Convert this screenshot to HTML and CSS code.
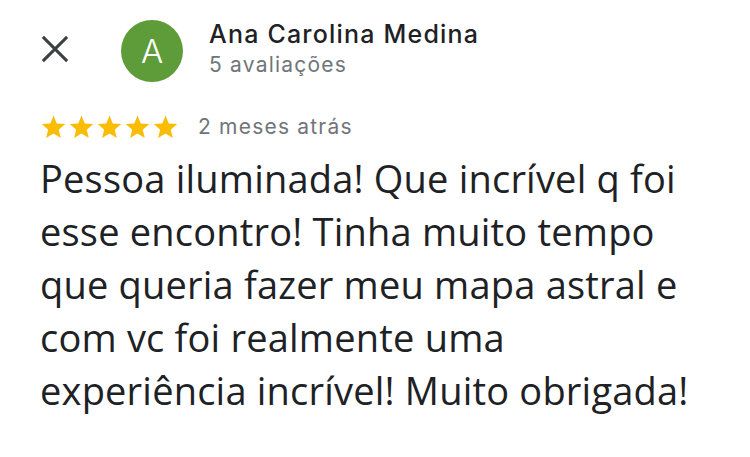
FILE: index.html
```html
<!DOCTYPE html>
<html lang="pt">
<head>
<meta charset="utf-8">
<link rel="stylesheet" href="styles.css">
</head>
<body>
<div class="review">
  <div class="header">
    <svg class="close" width="30" height="30" viewBox="0 0 30 30"><path d="M2 2 L28 28 M28 2 L2 28" stroke="#3c4043" stroke-width="3.2" stroke-linecap="butt"/></svg>
    <div class="avatar">A</div>
    <div class="who">
      <div class="name">Ana Carolina Medina</div>
      <div class="count">5 avaliações</div>
    </div>
  </div>
  <div class="meta">
    <div class="stars">
      <svg viewBox="0 0 24 24" class="star"><path d="M12 1.5l3.1 7.6 8.2.6-6.3 5.3 2 8L12 18.6 4.9 23l2-8L.7 9.7l8.2-.6z"/></svg>
      <svg viewBox="0 0 24 24" class="star"><path d="M12 1.5l3.1 7.6 8.2.6-6.3 5.3 2 8L12 18.6 4.9 23l2-8L.7 9.7l8.2-.6z"/></svg>
      <svg viewBox="0 0 24 24" class="star"><path d="M12 1.5l3.1 7.6 8.2.6-6.3 5.3 2 8L12 18.6 4.9 23l2-8L.7 9.7l8.2-.6z"/></svg>
      <svg viewBox="0 0 24 24" class="star"><path d="M12 1.5l3.1 7.6 8.2.6-6.3 5.3 2 8L12 18.6 4.9 23l2-8L.7 9.7l8.2-.6z"/></svg>
      <svg viewBox="0 0 24 24" class="star"><path d="M12 1.5l3.1 7.6 8.2.6-6.3 5.3 2 8L12 18.6 4.9 23l2-8L.7 9.7l8.2-.6z"/></svg>
    </div>
    <span class="date">2 meses atrás</span>
  </div>
  <p class="text">Pessoa iluminada! Que incrível q foi<br>esse encontro! Tinha muito tempo<br>que queria fazer meu mapa astral e<br>com vc foi realmente uma<br>experiência incrível! Muito obrigada!</p>
</div>
</body>
</html>
```
FILE: styles.css
```css
html, body {
  margin: 0;
  background: #ffffff;
}
.review {
  padding: 20px 0 0 41px;
}
.header {
  display: flex;
  align-items: center;
}
.close {
  display: block;
  width: 28px;
  height: 28px;
  margin-top: -4px;
}
.avatar {
  width: 62px;
  height: 62px;
  border-radius: 50%;
  background: #5d9c38;
  color: #fff;
  font-family: "Inter", "Liberation Sans", sans-serif;
  font-size: 33px;
  font-weight: 300;
  display: flex;
  align-items: center;
  justify-content: center;
  margin-left: 52px;
}
.who {
  margin-left: 26px;
  margin-top: -4px;
  font-family: "Inter", "Liberation Sans", sans-serif;
}
.name {
  font-size: 25px;
  font-weight: 500;
  color: #202124;
  line-height: 32px;
  letter-spacing: 1.2px;
}
.count {
  font-size: 21px;
  color: #70757a;
  line-height: 30px;
  letter-spacing: 1.2px;
}
.meta {
  display: flex;
  align-items: center;
  margin-top: 32px;
}
.stars {
  display: flex;
  gap: 3px;
}
.star {
  width: 25px;
  height: 25px;
  fill: #fbbc04;
}
.date {
  margin-left: 20px;
  font-family: "Inter", "Liberation Sans", sans-serif;
  font-size: 21px;
  color: #70757a;
  letter-spacing: 1.2px;
}
.text {
  margin: 13px 0 0 -1px;
  font-family: "Open Sans", sans-serif;
  font-size: 38px;
  line-height: 53px;
  color: #202124;
  letter-spacing: 0.2px;
}
```
